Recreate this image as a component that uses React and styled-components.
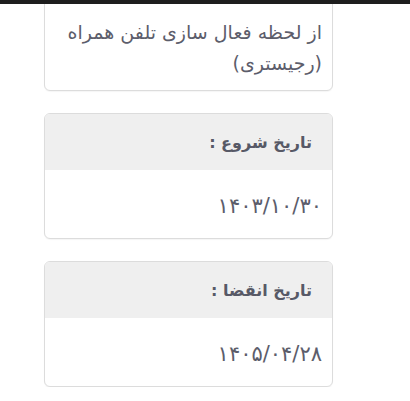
import styled, { createGlobalStyle } from "styled-components";

const GlobalStyle = createGlobalStyle`
  html, body {
    margin: 0;
    padding: 0;
    background: #ffffff;
  }
  body {
    font-family: "DejaVu Sans", "Noto Sans", sans-serif;
    overflow: hidden;
  }
`;

const TopBar = styled.div`
  position: fixed;
  top: 0;
  left: 0;
  right: 0;
  height: 4px;
  background-color: #1e1e1e;
  z-index: 2;
`;

const Page = styled.div`
  direction: rtl;
  width: 289px;
  margin-left: 44px;
  margin-top: -4px;
  display: flex;
  flex-direction: column;
  gap: 22px;
`;

const Card = styled.div`
  border: 1px solid #dcdcdc;
  border-radius: 6px;
  overflow: hidden;
  background-color: #ffffff;
  box-shadow: 0 1px 1px rgba(0, 0, 0, 0.04);
`;

const Note = styled.p`
  margin: 0;
  padding: 20px 10px 11px;
  font-size: 19px;
  line-height: 31px;
  color: #5c5d6b;
`;

const Header = styled.div`
  height: 56px;
  display: flex;
  align-items: center;
  padding: 0 20px;
  background-color: #efefef;
  font-size: 16px;
  font-weight: bold;
  color: #575966;
`;

const Body = styled.div`
  height: 68px;
  display: flex;
  align-items: center;
  padding: 4px 10px 0;
  box-sizing: border-box;
  font-size: 21px;
  color: #5c5d6b;
`;

function DateCard({ title, value }) {
  return (
    <Card>
      <Header>{title}</Header>
      <Body>{value}</Body>
    </Card>
  );
}

export default function App() {
  return (
    <>
      <GlobalStyle />
      <TopBar />
      <Page>
        <Card>
          <Note>
            از لحظه فعال سازی تلفن همراه
            <br />
            (رجیستری)
          </Note>
        </Card>
        <DateCard title="تاریخ شروع :" value="۱۴۰۳/۱۰/۳۰" />
        <DateCard title="تاریخ انقضا :" value="۱۴۰۵/۰۴/۲۸" />
      </Page>
    </>
  );
}
